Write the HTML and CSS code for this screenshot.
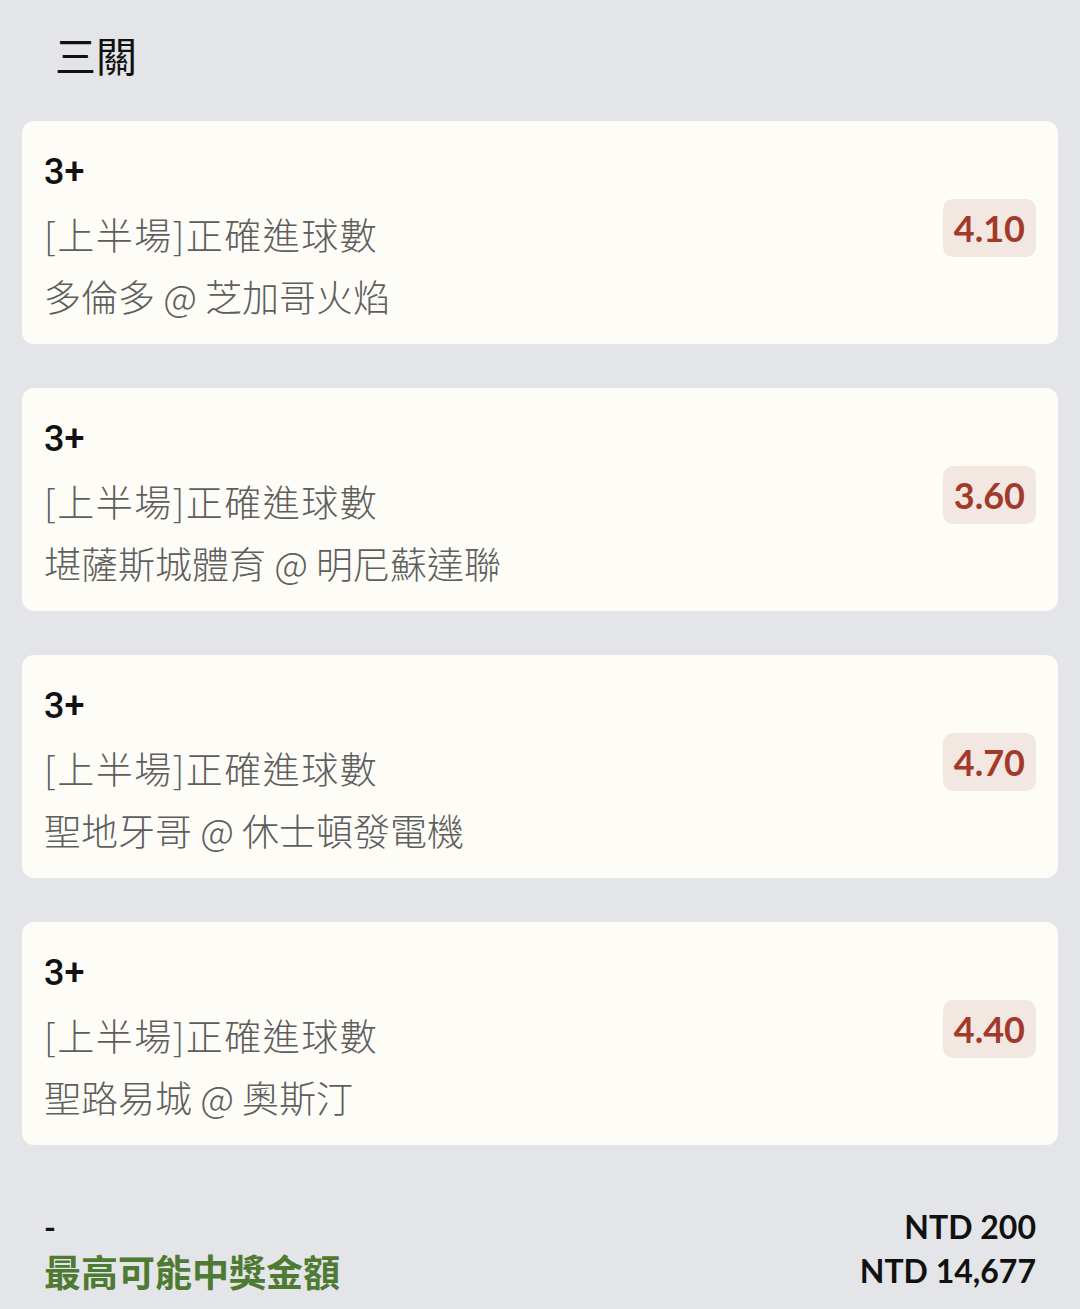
FILE: index.html
```html
<!DOCTYPE html>
<html lang="zh-Hant">
<head>
<meta charset="utf-8">
<link rel="stylesheet" href="styles.css">
</head>
<body>
<div class="page">
  <h1 class="title">三關</h1>
  <div class="list">
    <div class="card">
      <div class="info">
        <div class="sel">3+</div>
        <div class="market">[上半場]正確進球數</div>
        <div class="match">多倫多 @ 芝加哥火焰</div>
      </div>
      <div class="odds">4.10</div>
    </div>
    <div class="card">
      <div class="info">
        <div class="sel">3+</div>
        <div class="market">[上半場]正確進球數</div>
        <div class="match">堪薩斯城體育 @ 明尼蘇達聯</div>
      </div>
      <div class="odds">3.60</div>
    </div>
    <div class="card">
      <div class="info">
        <div class="sel">3+</div>
        <div class="market">[上半場]正確進球數</div>
        <div class="match">聖地牙哥 @ 休士頓發電機</div>
      </div>
      <div class="odds">4.70</div>
    </div>
    <div class="card">
      <div class="info">
        <div class="sel">3+</div>
        <div class="market">[上半場]正確進球數</div>
        <div class="match">聖路易城 @ 奧斯汀</div>
      </div>
      <div class="odds">4.40</div>
    </div>
  </div>
  <div class="summary">
    <div class="dash">-</div>
    <div class="amount">NTD 200</div>
    <div class="win-label">最高可能中獎金額</div>
    <div class="amount">NTD 14,677</div>
  </div>
</div>
</body>
</html>
```

FILE: styles.css
```css
html, body {
  margin: 0;
  padding: 0;
  background: #e4e5e8;
}
body {
  width: 1080px;
  height: 1309px;
  overflow: hidden;
  font-family: "Noto Sans CJK TC", "Noto Sans", sans-serif;
}
.page {
  padding: 0 22px;
}
.title {
  margin: 0;
  padding: 33px 0 0 33px;
  font-size: 41px;
  line-height: 42px;
  font-weight: 400;
  color: #111;
  height: 85px;
  box-sizing: border-box;
}
.list {
  margin-top: 36px;
  display: flex;
  flex-direction: column;
  gap: 44px;
}
.card {
  background: #fdfcf6;
  border-radius: 12px;
  padding: 20px 22px 17px 22px;
  display: flex;
  align-items: center;
  justify-content: space-between;
}
.info {
  display: flex;
  flex-direction: column;
}
.sel {
  font-family: Roboto, "Noto Sans", sans-serif;
  font-weight: 500;
  font-size: 36px;
  line-height: 62px;
  color: #111;
}
.market, .match {
  font-size: 37px;
  line-height: 62px;
  color: #5e5e5e;
  font-weight: 300;
}
.market {
  letter-spacing: 1.5px;
}
.odds {
  font-family: Lato, sans-serif;
  font-weight: 700;
  font-size: 36px;
  line-height: 58px;
  height: 58px;
  padding: 0 11px;
  border-radius: 10px;
  background: #f3e7e1;
  color: #a3392a;
  margin-top: -12px;
}
.summary {
  margin-top: 59px;
  padding: 0 22px;
  display: grid;
  grid-template-columns: 1fr auto;
  grid-auto-rows: 44px;
  align-items: center;
}
.dash {
  font-family: Lato, sans-serif;
  font-weight: 700;
  font-size: 32px;
  color: #111;
}
.amount {
  font-family: Lato, sans-serif;
  font-weight: 700;
  font-size: 32px;
  color: #111;
  text-align: right;
}
.win-label {
  font-size: 37px;
  font-weight: 700;
  color: #4e7a34;
  margin-top: 2px;
}
```
